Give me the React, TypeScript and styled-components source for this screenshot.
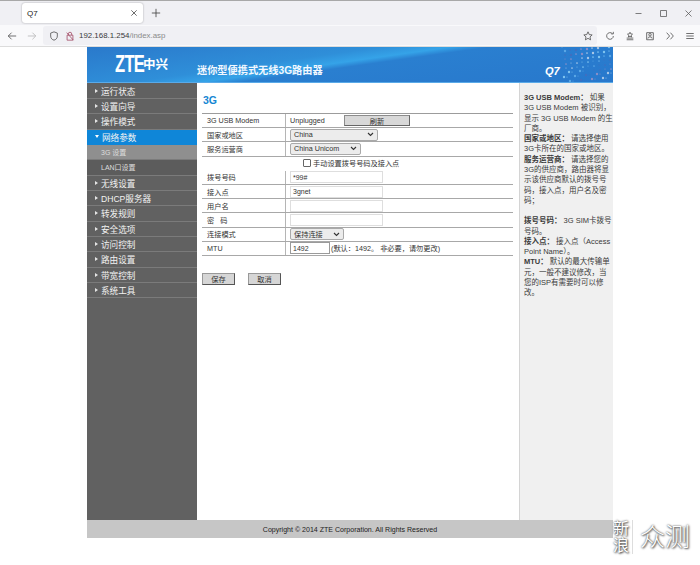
import React from "react";
import styled, { createGlobalStyle } from "styled-components";

const Global = createGlobalStyle`
  html, body { margin: 0; padding: 0; background: #fff; }
  body { width: 700px; height: 565px; overflow: hidden; font-family: "Liberation Sans", "Noto Sans CJK SC", sans-serif; }
  #root { width: 700px; height: 565px; }
`;
const Screen = styled.div`position: relative; width: 700px; height: 565px; background: #fff; overflow: hidden;`;
const TabStrip = styled.div`
  height: 25px; box-sizing: border-box; border-top: 1px solid #a8a8a8; background: #f0f0f4;
  display: flex; align-items: center; padding-left: 22px;
`;
const Tab = styled.div`
  width: 121px; height: 20px; box-sizing: border-box; background: #fff; border-radius: 3px;
  box-shadow: 0 0 2px rgba(0,0,0,.35); display: flex; align-items: center; justify-content: space-between;
  padding: 0 5px 0 5px; font-size: 8px; color: #222;
`;
const NewTab = styled.div`margin-left: 8px; display: flex; color: #444;`;
const WinButtons = styled.div`margin-left: auto; display: flex; align-items: center; gap: 16px; padding-right: 7px; color: #555;`;
const NavBar = styled.div`
  height: 22px; box-sizing: border-box; background: #f9f9fb; border-bottom: 1px solid #dcdcdc; display: flex; align-items: center;
  padding-left: 7px; color: #555;
`;
const NavIcon = styled.div<{ $dim?: boolean; $gap?: number; $tone?: string }>`
  display: flex; margin-right: ${(p) => p.$gap ?? 0}px; color: ${(p) => p.$tone ?? (p.$dim ? "#b8b8b8" : "#555")};
`;
const UrlBox = styled.div`
  width: 554px; height: 19px; margin-left: 6px; background: #f0f0f4; display: flex; align-items: center;
  padding-left: 6px; box-sizing: border-box; border-radius: 3px;
`;
const Url = styled.span`font-size: 7.9px; color: #3a3a3a; margin-left: 4px;`;
const UrlDim = styled.span`color: #8a8a8a;`;
const UrlEnd = styled.div`margin-left: auto; padding-right: 4px; display: flex;`;
const Tools = styled.div`display: flex; align-items: center; gap: 10px; margin-left: 8px;`;

const Page = styled.div`width: 526px; margin-left: 87px;`;
const Banner = styled.div`
  position: relative; height: 36px; box-sizing: border-box;
  background: linear-gradient(172deg, #2a79cb 0%, #2f8fd9 38%, #35a3e8 47%, #2a7fd0 52%, #2878cc 100%);
  border-bottom: 1px solid #5aaae8; display: flex; align-items: center; overflow: hidden;
`;
const Logo = styled.div`
  width: 110px; flex: none; box-sizing: border-box; padding-left: 28px; color: #fff; font-weight: 700; line-height: 20px;
  display: flex; align-items: center; margin-top: -1px;
`;
const LogoLatin = styled.span`
  display: inline-block; width: 28px; font-size: 23px; letter-spacing: -1px; transform: scaleX(0.72); transform-origin: left center;
`;
const LogoZh = styled.span`font-size: 12.5px; font-weight: 700; margin-top: 1px;`;
const Slogan = styled.div`margin-top: 9px; margin-left: 0; color: #f2f8ff; font-size: 10.2px; font-weight: 700; white-space: nowrap;`;
const ModelTag = styled.div`position: absolute; left: 458px; top: 18px; color: #fff; font-size: 11px; font-weight: 700; font-style: italic;`;
const Stars = styled.svg`position: absolute; right: 0; top: 0;`;
const Body = styled.div`display: flex; height: 437px;`;
const Side = styled.nav`width: 110px; background: #616161; box-sizing: border-box; padding-top: 0.5px;`;
const MenuItem = styled.div<{ $active?: boolean; $sub?: boolean; $current?: boolean }>`
  height: 15.35px; box-sizing: border-box; display: flex; align-items: center;
  padding-left: ${(p) => (p.$sub ? 14 : 8)}px;
  font-size: ${(p) => (p.$sub ? 7 : 8.6)}px;
  color: ${(p) => (p.$sub ? "#ddd" : "#f2f2f2")};
  background: ${(p) => (p.$active ? "#0f86d8" : p.$current ? "#8f8f8f" : p.$sub ? "#5c5c5c" : "#616161")};
  border-bottom: 1px solid ${(p) => (p.$active ? "#0f86d8" : "#7b7b7b")};
`;
const Arrow = styled.span<{ $open?: boolean }>`
  width: 0; height: 0; margin-right: 3px; border-style: solid;
  border-width: ${(p) => (p.$open ? "3px 2px 0 2px" : "2px 0 2px 3px")};
  border-color: ${(p) => (p.$open ? "#fff transparent transparent transparent" : "transparent transparent transparent #e5e5e5")};
`;
const Main = styled.main`width: 322px; box-sizing: border-box; background: #fff; padding: 11px 6px 0 5px;`;
const Title = styled.h2`margin: 0 0 6px 1px; font-size: 10.5px; line-height: 13px; color: #1586d3; font-weight: 700;`;
const FormTable = styled.div`border-top: 1px solid #9c9c9c; width: 311px;`;
const Row = styled.div<{ $plain?: boolean }>`
  display: flex; height: 14.2px; box-sizing: border-box; align-items: center;
  border-bottom: 1px solid ${(p) => (p.$plain ? "transparent" : "#a8a8a8")};
  font-size: 7.2px; color: #333;
`;
const Label = styled.div`
  width: 84px; height: 100%; padding-left: 5px; box-sizing: border-box; display: flex; align-items: center;
  border-right: 1px solid #b5b5b5; white-space: nowrap;
`;
const Cell = styled.div`flex: 1; padding-left: 4px; display: flex; align-items: center; white-space: nowrap;`;
const CheckCell = styled.div`flex: 1; padding-left: 101px; display: flex; align-items: center; color: #333; white-space: nowrap;`;
const Check = styled.span`
  width: 6px; height: 6px; border: 1px solid #666; margin-right: 2px; border-radius: 1px; background: #fff;
`;
const StatusText = styled.span`width: 54px;`;
const RefreshBtn = styled.div`
  width: 66px; height: 11px; background: #d8d8d8; border: 1px solid #8c8c8c; border-right-color: #666; border-bottom-color: #666;
  display: flex; align-items: center; justify-content: center; font-size: 7.2px; color: #333; box-sizing: border-box;
`;
const Select = styled.div<{ $w: number }>`
  width: ${(p) => p.$w}px; height: 12px; box-sizing: border-box; background: #ececec; border: 1px solid #a9a9a9; border-radius: 2px;
  display: flex; align-items: center; justify-content: space-between; padding: 0 3px; font-size: 7.2px; color: #333;
`;
const Input = styled.div<{ $w: number }>`
  width: ${(p) => p.$w}px; height: 12px; box-sizing: border-box; background: #fff; border: 1px solid #dedede;
  display: flex; align-items: center; padding-left: 2px; font-size: 7px; color: #333;
`;
const MtuInput = styled(Input)`border-color: #9a9a9a;`;
const Hint = styled.span`margin-left: 1px; color: #333;`;
const Actions = styled.div`display: flex; gap: 13px; margin-top: 17px;`;
const ActionBtn = styled.div`
  width: 33px; height: 12px; box-sizing: border-box; background: #d6d6d6; border: 1px solid #999; border-right-color: #555; border-bottom-color: #555;
  display: flex; align-items: center; justify-content: center; font-size: 7.2px; color: #333;
`;
const Help = styled.aside`
  flex: 1; background: #f0f0f0; border-left: 1px solid #d4d4d4; padding: 10px 0 0 4px; font-size: 7.5px; line-height: 10.3px; color: #3a3a3a; white-space: nowrap;
`;
const HelpPara = styled.p<{ $gap?: boolean }>`margin: 0; margin-top: ${(p) => (p.$gap ? 10 : 0)}px;`;
const Footer = styled.footer`
  height: 18px; background: #c6c6c6; display: flex; align-items: center; justify-content: center; font-size: 7.05px; color: #222;
`;
const Watermark = styled.div`
  position: absolute; left: 613px; top: 519px; width: 80px; height: 36px; display: flex; align-items: center;
  color: #fff; text-shadow: 0 0 2px #333, 1px 1px 2px #555;
`;
const WmSmall = styled.div`font-size: 16px; line-height: 17px; width: 18px; border-right: 1px solid #ddd; padding-right: 1px;`;
const WmBig = styled.div`font-size: 25px; line-height: 28px; margin-left: 7px; white-space: nowrap; font-weight: 300;`;

const Chevron = () => (
  <svg width="7" height="5" viewBox="0 0 7 5"><path d="M1 1l2.5 2.5L6 1" fill="none" stroke="#333" strokeWidth="1.1" /></svg>
);
const Ic = ({ d, s = 12 }: { d: string; s?: number }) => (
  <svg width={s} height={s} viewBox="0 0 12 12" fill="none" stroke="currentColor" strokeWidth="1"><path d={d} /></svg>
);

const menu: { t: string; a?: boolean; s?: boolean; c?: boolean }[] = [
  { t: "运行状态" }, { t: "设置向导" }, { t: "操作模式" }, { t: "网络参数", a: true },
  { t: "3G 设置", s: true, c: true }, { t: "LAN口设置", s: true },
  { t: "无线设置" }, { t: "DHCP服务器" }, { t: "转发规则" }, { t: "安全选项" },
  { t: "访问控制" }, { t: "路由设置" }, { t: "带宽控制" }, { t: "系统工具" },
];
const dots = Array.from({ length: 70 }, (_, i) => ({
  x: ((i * 37) % 50) + 1 + (i % 3),
  y: (i * 23) % 35,
  r: 0.5 + (i % 3) * 0.35,
  c: ["#7fc4f0", "#3f6fc0", "#a9c8e8", "#5aa7e6", "#8a8fc8"][i % 5],
}));

export default function App() {
  return (
    <Screen>
      <Global />
      <TabStrip>
        <Tab>Q7<Ic s={8} d="M2 2l8 8M10 2l-8 8" /></Tab>
        <NewTab><Ic s={10} d="M6 1v10M1 6h10" /></NewTab>
        <WinButtons>
          <Ic s={9} d="M2 6h8" />
          <Ic s={9} d="M2 2h8v8H2z" />
          <Ic s={9} d="M2 2l8 8M10 2l-8 8" />
        </WinButtons>
      </TabStrip>
      <NavBar>
        <NavIcon $gap={10}><Ic s={10} d="M11 6H1.5M5.5 2L1.5 6l4 4" /></NavIcon>
        <NavIcon $dim><Ic s={10} d="M1 6h9.5M6.5 2l4 4-4 4" /></NavIcon>
        <UrlBox>
          <NavIcon $gap={6}><Ic s={10} d="M6 1l4 1.5v3.5c0 3-2 4.500-4 5-2-.5-4-2-4-5V2.500z" /></NavIcon>
          <NavIcon $tone="#a5506a"><Ic s={10} d="M4 5V3.500a2 2 0 014 0V5M2.500 5h7v6h-7zM2 2l8 9" /></NavIcon>
          <Url>192.168.1.254<UrlDim>/index.asp</UrlDim></Url>
          <UrlEnd><NavIcon><Ic s={10} d="M6 1l1.500 3.300 3.500.4-2.600 2.400.7 3.500L6 8.800 2.900 10.600l.7-3.500L1 4.700l3.500-.4z" /></NavIcon></UrlEnd>
        </UrlBox>
        <Tools>
          <Ic s={10} d="M10 6a4 4 0 11-1.200-2.900M10 1v2.500H7.500" />
          <Ic s={10} d="M2 10.500h8M6 1.500l1 2 2 .3-1.500 1.400.4 2L6 6.200 4.100 7.200l.4-2L3 3.800l2-.3zM2 8.500h8" />
          <Ic s={10} d="M2 10.500h8V2H2zM6 3a1.500 1.500 0 110 3 1.500 1.500 0 010-3zM3.500 9a2.500 2 0 015 0" />
          <Ic s={10} d="M2 2l3.500 4L2 10M6.500 2L10 6l-3.500 4" />
          <Ic s={10} d="M1.500 3h9M1.500 6h9M1.500 9h9" />
        </Tools>
      </NavBar>
      <Page>
        <Banner>
          <Logo><LogoLatin>ZTE</LogoLatin><LogoZh>中兴</LogoZh></Logo>
          <Slogan>迷你型便携式无线3G路由器</Slogan>
          <ModelTag>Q7</ModelTag>
          <Stars width="52" height="36" viewBox="0 0 52 36">
            {dots.map((d, i) => <circle key={i} cx={d.x} cy={d.y} r={d.r} fill={d.c} />)}
          </Stars>
        </Banner>
        <Body>
          <Side>
            {menu.map((m) => (
              <MenuItem key={m.t} $active={m.a} $sub={m.s} $current={m.c}>
                {!m.s && <Arrow $open={m.a} />}{m.t}
              </MenuItem>
            ))}
          </Side>
          <Main>
            <Title>3G</Title>
            <FormTable>
              <Row><Label>3G USB Modem</Label><Cell><StatusText>Unplugged</StatusText><RefreshBtn>刷新</RefreshBtn></Cell></Row>
              <Row><Label>国家或地区</Label><Cell><Select $w={88}>China<Chevron /></Select></Cell></Row>
              <Row><Label>服务运营商</Label><Cell><Select $w={71}>China Unicom<Chevron /></Select></Cell></Row>
              <Row $plain><CheckCell><Check />手动设置拨号号码及接入点</CheckCell></Row>
              <Row><Label>拨号号码</Label><Cell><Input $w={93}>*99#</Input></Cell></Row>
              <Row><Label>接入点</Label><Cell><Input $w={93}>3gnet</Input></Cell></Row>
              <Row><Label>用户名</Label><Cell><Input $w={93} /></Cell></Row>
              <Row><Label>密&nbsp;&nbsp;&nbsp;码</Label><Cell><Input $w={93} /></Cell></Row>
              <Row><Label>连接模式</Label><Cell><Select $w={54}>保持连接<Chevron /></Select></Cell></Row>
              <Row><Label>MTU</Label><Cell><MtuInput $w={40}>1492</MtuInput><Hint>(默认：1492。 非必要，请勿更改)</Hint></Cell></Row>
            </FormTable>
            <Actions><ActionBtn>保存</ActionBtn><ActionBtn>取消</ActionBtn></Actions>
          </Main>
          <Help>
            <HelpPara><b>3G USB Modem：</b> 如果<br />3G USB Modem 被识别，<br />显示 3G USB Modem 的生<br />厂商。</HelpPara>
            <HelpPara><b>国家或地区：</b> 请选择使用<br />3G卡所在的国家或地区。</HelpPara>
            <HelpPara><b>服务运营商：</b> 请选择您的<br />3G的供应商，路由器将显<br />示该供应商默认的拨号号<br />码，接入点，用户名及密<br />码；</HelpPara>
            <HelpPara $gap><b>拨号号码：</b> 3G SIM卡拨号<br />号码。</HelpPara>
            <HelpPara><b>接入点：</b> 接入点（Access<br />Point Name）。</HelpPara>
            <HelpPara><b>MTU：</b> 默认的最大传输单<br />元，一般不建议修改，当<br />您的ISP有需要时可以修<br />改。</HelpPara>
          </Help>
        </Body>
        <Footer>Copyright © 2014 ZTE Corporation. All Rights Reserved</Footer>
      </Page>
      <Watermark>
        <WmSmall>新浪</WmSmall>
        <WmBig>众测</WmBig>
      </Watermark>
    </Screen>
  );
}
